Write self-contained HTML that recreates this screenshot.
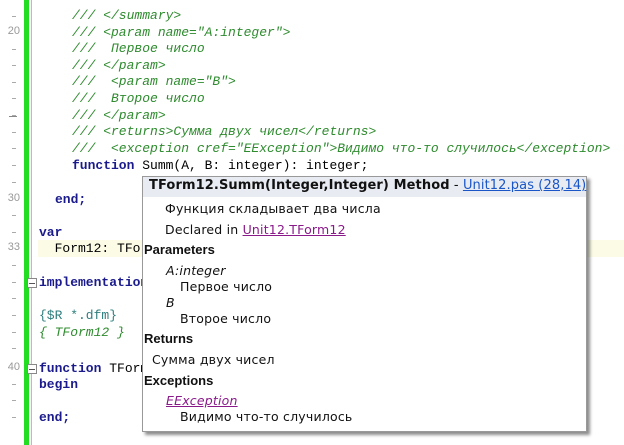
<!DOCTYPE html>
<html><head><meta charset="utf-8"><style>
body{margin:0;width:624px;height:445px;background:#fff;position:relative;overflow:hidden;font-family:"Liberation Sans","DejaVu Sans",sans-serif}
.c{position:absolute;font-family:"Liberation Mono",monospace;font-size:13px;white-space:pre;line-height:16px}
.g{color:#2e8b2e;font-style:italic}
.k{color:#1a1a8c;font-weight:bold}
.n{position:absolute;left:0;width:20px;font-family:"Liberation Sans",sans-serif;font-size:11px;color:#999;text-align:right}
.d{position:absolute;left:12px;width:4px;height:1px;background:#aaa}
.p{position:absolute;font-family:"DejaVu Sans",sans-serif;font-size:12.5px;letter-spacing:0.2px;white-space:pre;color:#111}
.b{font-family:"Liberation Sans",sans-serif;font-weight:bold;font-size:13px;letter-spacing:0}
.hb{font-family:"DejaVu Sans",sans-serif;font-weight:bold}
a{text-decoration:underline}
.f{position:absolute;left:27px;width:8px;height:8px;border:1px solid #888;background:#fff}
.f:after{content:"";position:absolute;left:1px;top:3.5px;width:6px;height:1px;background:#555}
</style></head><body>
<div style="position:absolute;left:24px;top:0;width:5px;height:445px;background:#22dd22"></div>
<div style="position:absolute;left:31px;top:0;width:1px;height:445px;background:#bbb"></div>
<div style="position:absolute;left:38px;top:240px;width:586px;height:17px;background:#fbfbe6"></div>

<div class="n" style="top:25px">20</div>
<div class="n" style="top:192px">30</div>
<div class="n" style="top:241px">33</div>
<div class="n" style="top:361px">40</div>
<div class="d" style="top:16px"></div><div class="d" style="top:49px"></div><div class="d" style="top:65px"></div><div class="d" style="top:82px"></div><div class="d" style="top:98px"></div><div class="d" style="top:115px"></div><div class="d" style="top:132px"></div><div class="d" style="top:148px"></div><div class="d" style="top:165px"></div><div class="d" style="top:182px"></div><div class="d" style="top:215px"></div><div class="d" style="top:232px"></div><div class="d" style="top:265px"></div><div class="d" style="top:282px"></div><div class="d" style="top:298px"></div><div class="d" style="top:315px"></div><div class="d" style="top:332px"></div><div class="d" style="top:348px"></div><div class="d" style="top:384px"></div><div class="d" style="top:400px"></div><div class="d" style="top:417px"></div>
<div style="position:absolute;left:9px;top:116px;width:8px;height:1px;background:#888"></div>

<div class="f" style="top:278px"></div>
<div class="f" style="top:364px"></div>

<div class="c g" style="left:72px;top:8px">/// &lt;/summary&gt;</div>
<div class="c g" style="left:72px;top:25px">/// &lt;param name="A:integer"&gt;</div>
<div class="c g" style="left:72px;top:41px">///  Первое число</div>
<div class="c g" style="left:72px;top:58px">/// &lt;/param&gt;</div>
<div class="c g" style="left:72px;top:74px">///  &lt;param name="B"&gt;</div>
<div class="c g" style="left:72px;top:91px">///  Второе число</div>
<div class="c g" style="left:72px;top:108px">/// &lt;/param&gt;</div>
<div class="c g" style="left:72px;top:124px">/// &lt;returns&gt;Сумма двух чисел&lt;/returns&gt;</div>
<div class="c g" style="left:72px;top:141px">///  &lt;exception cref="EException"&gt;Видимо что-то случилось&lt;/exception&gt;</div>
<div class="c" style="left:72px;top:158px"><span class="k">function</span> Summ(A, B: integer): integer;</div>
<div class="c k" style="left:55px;top:192px">end;</div>
<div class="c k" style="left:39px;top:225px">var</div>
<div class="c" style="left:39px;top:241px">  Form12: TForm12;</div>
<div class="c k" style="left:39px;top:275px">implementation</div>
<div class="c" style="left:39px;top:308px;color:#2e7d7d">{$R *.dfm}</div>
<div class="c g" style="left:39px;top:325px">{ TForm12 }</div>
<div class="c" style="left:39px;top:361px"><span class="k">function</span> TForm12.Summ</div>
<div class="c k" style="left:39px;top:377px">begin</div>
<div class="c k" style="left:39px;top:410px">end;</div>

<div style="position:absolute;left:142px;top:176px;width:443px;height:254px;background:#fff;border:1px solid #999;box-shadow:3px 3px 3px rgba(0,0,0,.45)">
<div style="position:absolute;left:0;top:0;right:0;height:20px;background:#e8ecf2"></div>
<div class="p" style="left:6px;top:1px;font-size:13px;letter-spacing:0.1px"><span class="hb">TForm12.Summ(Integer,Integer) Method</span> - <a style="color:#1a56c8">Unit12.pas (28,14)</a></div>
<div class="p" style="left:22px;top:24px">Функция складывает два числа</div>
<div class="p" style="left:22px;top:45px">Declared in <a style="color:#8a1a8a">Unit12.TForm12</a></div>
<div class="p b" style="left:1px;top:65px">Parameters</div>
<div class="p" style="left:23px;top:86px;font-style:italic">A:integer</div>
<div class="p" style="left:37px;top:102px">Первое число</div>
<div class="p" style="left:23px;top:118px;font-style:italic">B</div>
<div class="p" style="left:37px;top:134px">Второе число</div>
<div class="p b" style="left:1px;top:154px">Returns</div>
<div class="p" style="left:9px;top:175px">Сумма двух чисел</div>
<div class="p b" style="left:1px;top:196px">Exceptions</div>
<div class="p" style="left:23px;top:216px;font-style:italic"><a style="color:#8a1a8a">EException</a></div>
<div class="p" style="left:37px;top:232px">Видимо что-то случилось</div>
</div>
</body></html>
